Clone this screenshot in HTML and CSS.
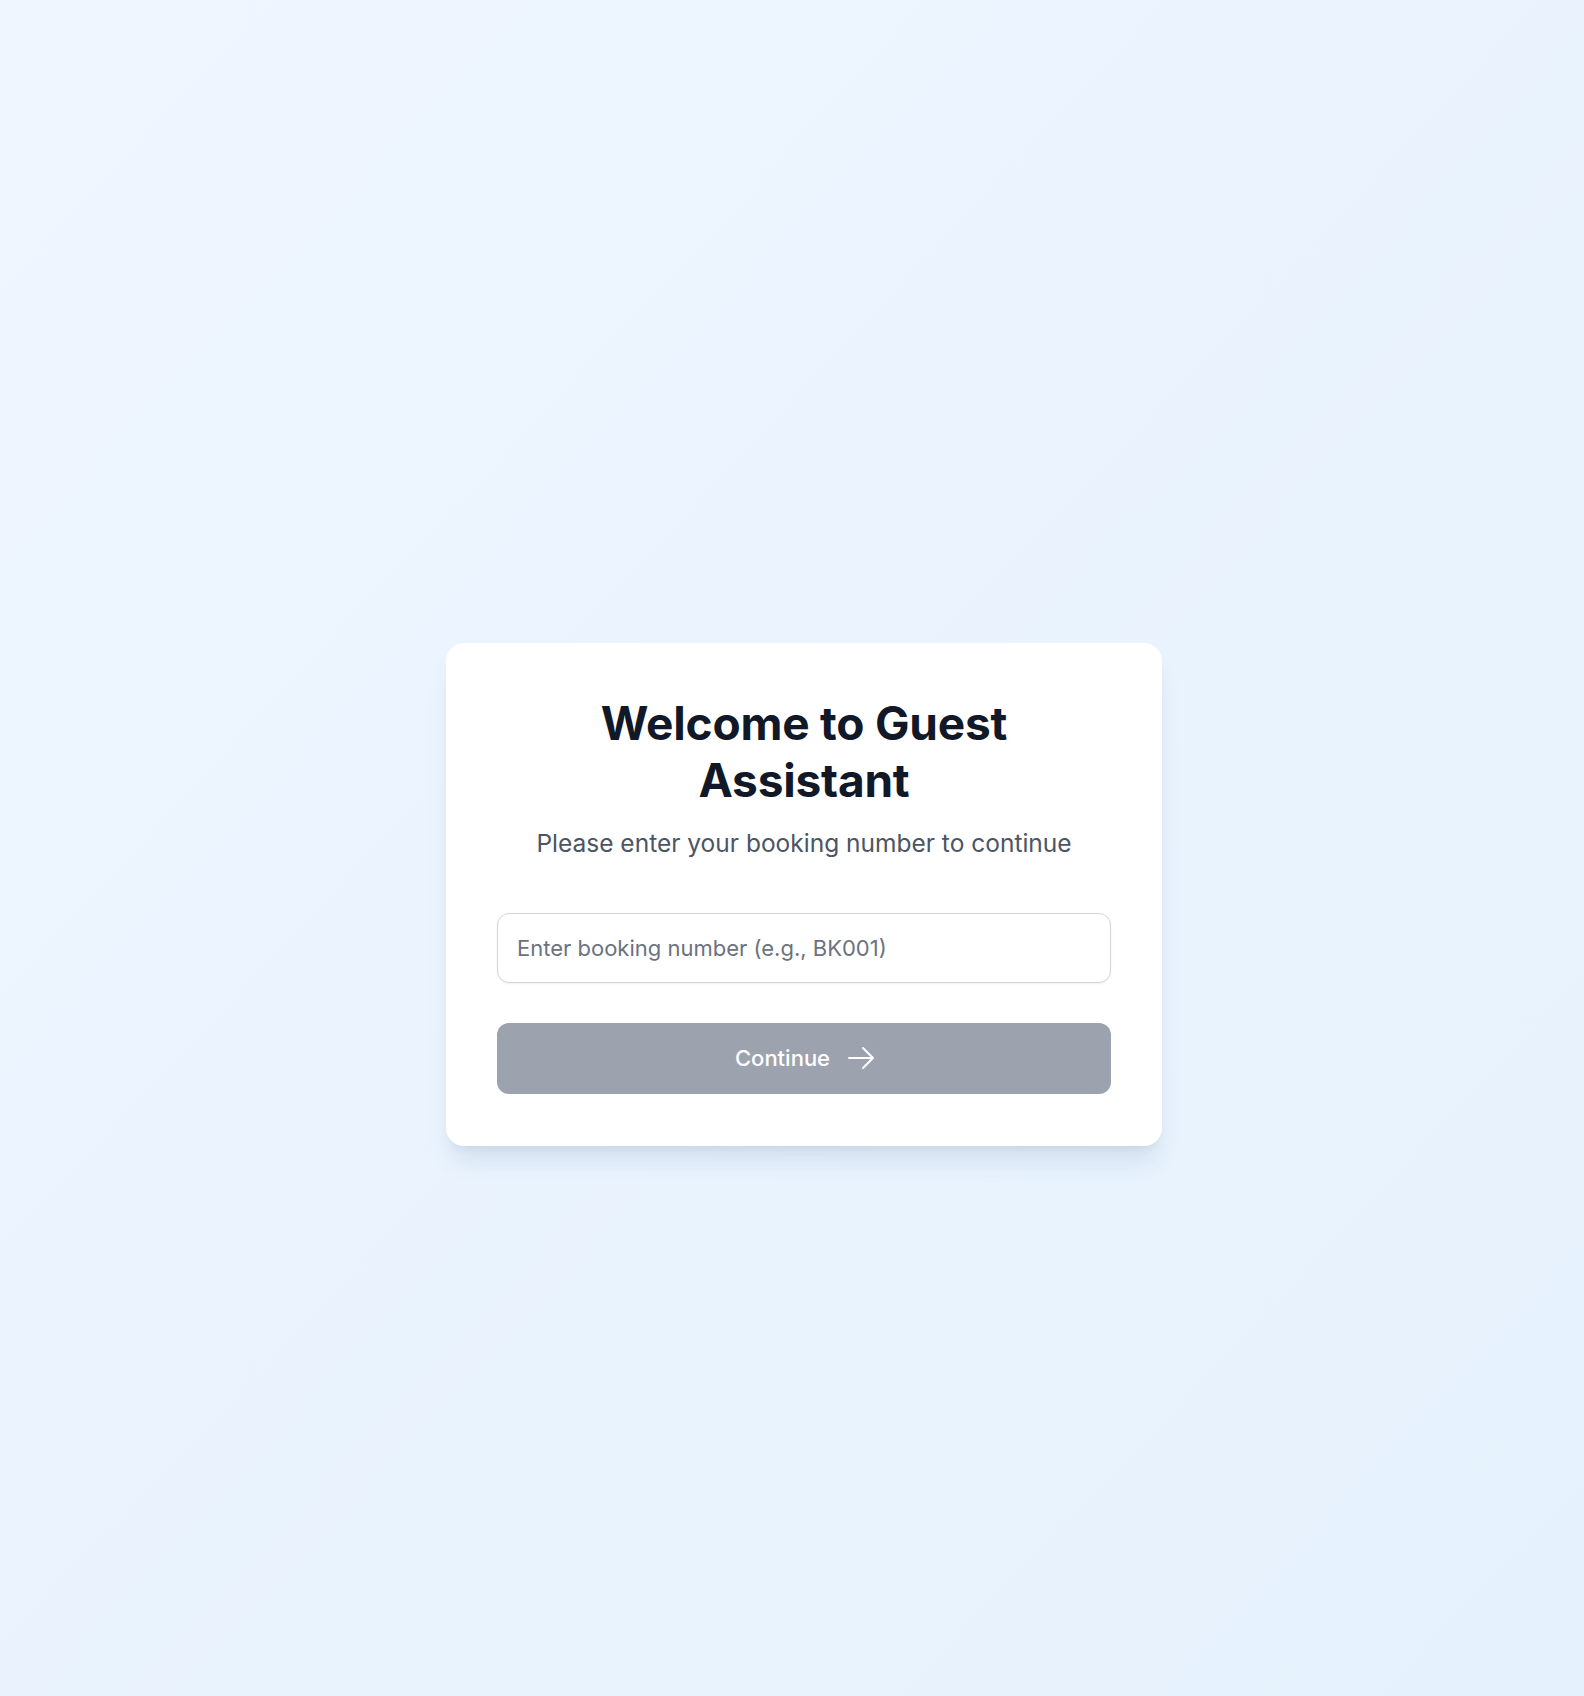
FILE: index.html
```html
<!DOCTYPE html>
<html lang="en">
<head>
<meta charset="utf-8">
<title>Guest Assistant</title>
<link rel="stylesheet" href="styles.css">
</head>
<body>
<main class="page">
  <section class="card">
    <h1 class="title">Welcome to Guest Assistant</h1>
    <p class="subtitle">Please enter your booking number to continue</p>
    <form class="form">
      <input class="input" type="text" placeholder="Enter booking number (e.g., BK001)">
      <button class="button" type="button" disabled>
        <span>Continue</span>
        <svg class="arrow" viewBox="0 0 24 24" width="32" height="32" fill="none" stroke="currentColor" stroke-width="1.5" stroke-linecap="round" stroke-linejoin="round"><path d="M13.5 4.5 21 12m0 0-7.5 7.5M21 12H3"/></svg>
      </button>
    </form>
  </section>
</main>
</body>
</html>
```

FILE: styles.css
```css
* { box-sizing: border-box; }
html, body { margin: 0; padding: 0; }
body {
  font-family: Inter, "Noto Sans", "Liberation Sans", sans-serif;
  background: linear-gradient(to bottom right, #eff6ff, #e5f1fc);
  min-height: 1696px;
}
.page {
  min-height: 1696px;
  display: flex;
  align-items: center;
  justify-content: center;
  padding: 92px 0 0 24px;
}
.card {
  width: 716px;
  background: #ffffff;
  border-radius: 18px;
  padding: 52px 51px 52px;
  box-shadow: 0 20px 25px -5px rgba(30, 64, 120, 0.10), 0 8px 10px -6px rgba(30, 64, 120, 0.08);
  text-align: center;
}
.title {
  margin: 0 auto;
  font-size: 46px;
  line-height: 57px;
  font-weight: 700;
  color: #111827;
  letter-spacing: -0.2px;
  max-width: 470px;
}
.subtitle {
  margin: 18px 0 0;
  font-size: 24.5px;
  line-height: 32px;
  color: #4b5563;
}
.form {
  margin-top: 54px;
  display: flex;
  flex-direction: column;
  gap: 40px;
}
.input {
  width: 100%;
  height: 70px;
  border: 1px solid #d1d5db;
  border-radius: 12px;
  padding: 0 19px;
  font-family: inherit;
  font-size: 22px;
  color: #111827;
  background: #fff;
  box-shadow: 0 1px 2px rgba(0, 0, 0, 0.05);
  outline: none;
}
.input::placeholder { color: #6b7280; }
.button {
  height: 71px;
  width: 100%;
  border: none;
  border-radius: 12px;
  background: #9ca3af;
  color: #ffffff;
  font-family: inherit;
  font-size: 22px;
  font-weight: 500;
  display: flex;
  align-items: center;
  justify-content: center;
  gap: 15px;
  padding-left: 10px;
  cursor: not-allowed;
}
.arrow { display: block; }
```
